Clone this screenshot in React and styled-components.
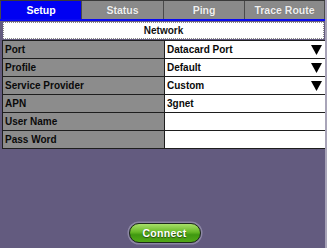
import React from "react";
import styled, { createGlobalStyle } from "styled-components";

const GlobalStyle = createGlobalStyle`
  html, body { margin: 0; padding: 0; }
  body { background: #635b7f; }
`;

const Screen = styled.div`
  width: 327px;
  height: 248px;
  background: #635b7f;
  display: flex;
  flex-direction: column;
  font-family: "Liberation Sans", Arial, sans-serif;
  font-weight: bold;
  overflow: hidden;
  box-sizing: border-box;
  border-right: 2px solid #a8a4b8;
`;

const TabBar = styled.div`
  display: grid;
  grid-template-columns: 82px 82px 81px 80px;
  height: 18px;
  border-top: 1px solid #3a3a3a;
  border-bottom: 2px solid #0a0af0;
  box-sizing: content-box;
`;

const Tab = styled.div`
  display: flex;
  align-items: center;
  justify-content: center;
  font-size: 10.5px;
  color: ${p => (p.active ? "#ffffff" : "#f0f0f0")};
  background: ${p => (p.active ? "#0000f2" : "#8a8a8a")};
  border-right: 1px solid #4a4a4a;
  border-left: ${p => (p.active ? "1px solid #4a4a4a" : "none")};
  text-shadow: ${p => (p.active ? "none" : "0 0 1px #666")};
`;

const Body = styled.div`
  padding: 1px 0 0 2px;
  display: flex;
  flex-direction: column;
  flex: 1;
`;

const SectionHeader = styled.div`
  height: 15px;
  margin: 0 1px 1px 1px;
  background: #ffffff;
  border: 1px dotted #8a8a8a;
  display: flex;
  align-items: center;
  justify-content: center;
  font-size: 10px;
  color: #111;
`;

const Form = styled.div`
  display: grid;
  grid-template-columns: 162px 161px;
  border-top: 1px solid #1e1e1e;
  border-left: 1px solid #1e1e1e;
`;

const Label = styled.div`
  height: 18px;
  box-sizing: border-box;
  background: #8c8c8c;
  border-right: 1px solid #1e1e1e;
  border-bottom: 1px solid #1e1e1e;
  display: flex;
  align-items: center;
  padding-left: 2px;
  font-size: 10px;
  color: #0a0a0a;
`;

const Value = styled.div`
  height: 18px;
  box-sizing: border-box;
  background: #ffffff;
  border-right: 1px solid #1e1e1e;
  border-bottom: 1px solid #1e1e1e;
  display: flex;
  align-items: center;
  justify-content: space-between;
  padding: 0 3px 0 2px;
  font-size: 10px;
  color: #0a0a0a;
`;

const Arrow = styled.svg`
  width: 11px;
  height: 10px;
`;

const Footer = styled.div`
  flex: 1;
  display: flex;
  align-items: flex-end;
  justify-content: center;
  padding-bottom: 5px;
`;

const ConnectButton = styled.button`
  width: 72px;
  height: 20px;
  border-radius: 10px;
  border: 1.5px solid #1c2a1a;
  box-shadow: 0 0 0 1.5px #8c86a4;
  background: linear-gradient(#a8e06a 0%, #66b826 45%, #3f9810 60%, #52a818 100%);
  color: #ffffff;
  font-family: "Liberation Sans", Arial, sans-serif;
  font-weight: bold;
  font-size: 10.5px;
  letter-spacing: 0.3px;
  text-shadow: 0 1px 1px #2a4a10;
  padding: 0;
  margin-left: 2px;
`;

const DropArrow = () => (
  <Arrow viewBox="0 0 11 10">
    <polygon points="0,0 11,0 5.5,10" fill="#000" />
  </Arrow>
);

const tabs = ["Setup", "Status", "Ping", "Trace Route"];

const fields = [
  { label: "Port", value: "Datacard Port", select: true },
  { label: "Profile", value: "Default", select: true },
  { label: "Service Provider", value: "Custom", select: true },
  { label: "APN", value: "3gnet" },
  { label: "User Name", value: "" },
  { label: "Pass Word", value: "" },
];

export default function App() {
  return (
    <>
      <GlobalStyle />
      <Screen>
        <TabBar>
          {tabs.map((t, i) => (
            <Tab key={t} active={i === 0}>{t}</Tab>
          ))}
        </TabBar>
        <Body>
          <SectionHeader>Network</SectionHeader>
          <Form>
            {fields.map(f => (
              <React.Fragment key={f.label}>
                <Label>{f.label}</Label>
                <Value>
                  <span>{f.value}</span>
                  {f.select && <DropArrow />}
                </Value>
              </React.Fragment>
            ))}
          </Form>
          <Footer>
            <ConnectButton>Connect</ConnectButton>
          </Footer>
        </Body>
      </Screen>
    </>
  );
}
